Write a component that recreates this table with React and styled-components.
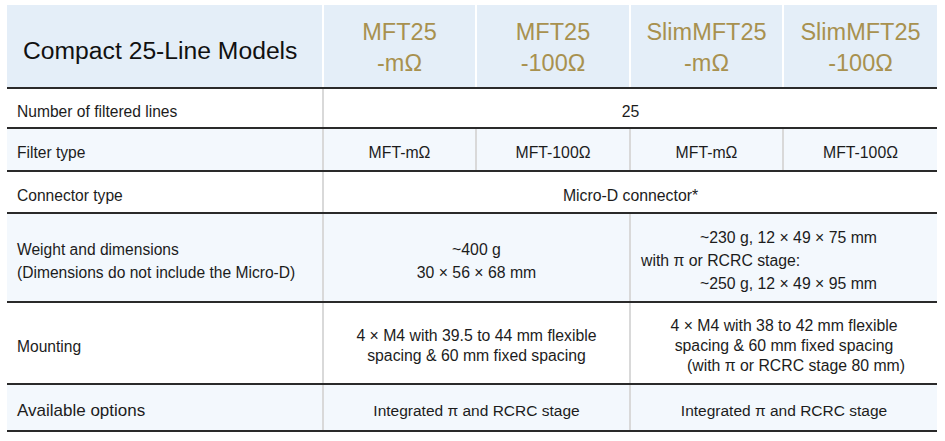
import React from "react";
import styled, { createGlobalStyle } from "styled-components";

const GlobalStyle = createGlobalStyle`
  html, body {
    margin: 0;
    padding: 0;
    background: #ffffff;
  }
  body {
    font-family: "Liberation Sans", Arial, sans-serif;
    color: #1c1c1c;
  }
`;

const Page = styled.div`
  padding: 5px 8px 0 7px;
`;

const Table = styled.div`
  width: 930px;
  display: flex;
  flex-direction: column;
`;

const Row = styled.div`
  display: grid;
  grid-template-columns: 315px 153px 154px 153px 155px;
  height: ${(p) => p.h}px;
  box-sizing: border-box;
  border-bottom: 2px solid #2a2a2a;
  background: ${(p) => (p.head ? "#e4eef8" : p.shade ? "#f3f8fd" : "#ffffff")};
`;

const Title = styled.div`
  display: flex;
  align-items: center;
  padding: 10px 0 0 16px;
  font-size: 24.7px;
  color: #111;
`;

const Model = styled.div`
  display: flex;
  flex-direction: column;
  align-items: center;
  justify-content: center;
  border-left: 2px solid #ffffff;
  font-size: 23.5px;
  line-height: 31px;
  color: #a8914f;
  padding-top: 3px;
`;

const Label = styled.div`
  display: flex;
  flex-direction: column;
  justify-content: center;
  padding: 6px 0 0 10px;
  font-size: ${(p) => (p.big ? 17 : 15.6)}px;
  line-height: ${(p) => p.lh || 23}px;
`;

const Cell = styled.div`
  grid-column: span ${(p) => p.span || 1};
  display: flex;
  flex-direction: column;
  align-items: ${(p) => (p.left ? "flex-start" : "center")};
  justify-content: center;
  padding-top: 6px;
  padding-left: ${(p) => (p.left ? 10 : 0)}px;
  border-left: 2px solid #d9d9d9;
  font-size: ${(p) => (p.big ? 15.5 : 15.8)}px;
  line-height: ${(p) => p.lh || 23}px;
  text-align: center;
`;

const Line = styled.span`
  display: block;
  padding-left: ${(p) => p.shift || 0}px;
`;

const models = [
  ["MFT25", "-mΩ"],
  ["MFT25", "-100Ω"],
  ["SlimMFT25", "-mΩ"],
  ["SlimMFT25", "-100Ω"],
];

export default function App() {
  return (
    <Page>
      <GlobalStyle />
      <Table>
        <Row head h={84}>
          <Title>Compact 25-Line Models</Title>
          {models.map(([a, b]) => (
            <Model key={a + b}>
              <span>{a}</span>
              <span>{b}</span>
            </Model>
          ))}
        </Row>

        <Row h={40}>
          <Label>Number of filtered lines</Label>
          <Cell span={4}>25</Cell>
        </Row>

        <Row shade h={43}>
          <Label>Filter type</Label>
          <Cell>MFT-mΩ</Cell>
          <Cell>MFT-100Ω</Cell>
          <Cell>MFT-mΩ</Cell>
          <Cell>MFT-100Ω</Cell>
        </Row>

        <Row h={42}>
          <Label>Connector type</Label>
          <Cell span={4}>Micro-D connector*</Cell>
        </Row>

        <Row shade h={89}>
          <Label>
            <span>Weight and dimensions</span>
            <span>(Dimensions do not include the Micro-D)</span>
          </Label>
          <Cell span={2}>
            <Line>~400 g</Line>
            <Line>30 × 56 × 68 mm</Line>
          </Cell>
          <Cell span={2} left>
            <Line shift={59}>~230 g, 12 × 49 × 75 mm</Line>
            <Line>with π or RCRC stage:</Line>
            <Line shift={59}>~250 g, 12 × 49 × 95 mm</Line>
          </Cell>
        </Row>

        <Row h={82}>
          <Label>Mounting</Label>
          <Cell span={2} lh={20}>
            <Line>4 × M4 with 39.5 to 44 mm flexible</Line>
            <Line>spacing &amp; 60 mm fixed spacing</Line>
          </Cell>
          <Cell span={2} lh={20}>
            <Line>4 × M4 with 38 to 42 mm flexible</Line>
            <Line>spacing &amp; 60 mm fixed spacing</Line>
            <Line shift={24}>(with π or RCRC stage 80 mm)</Line>
          </Cell>
        </Row>

        <Row shade h={47}>
          <Label big>Available options</Label>
          <Cell span={2} big>Integrated π and RCRC stage</Cell>
          <Cell span={2} big>Integrated π and RCRC stage</Cell>
        </Row>
      </Table>
    </Page>
  );
}
